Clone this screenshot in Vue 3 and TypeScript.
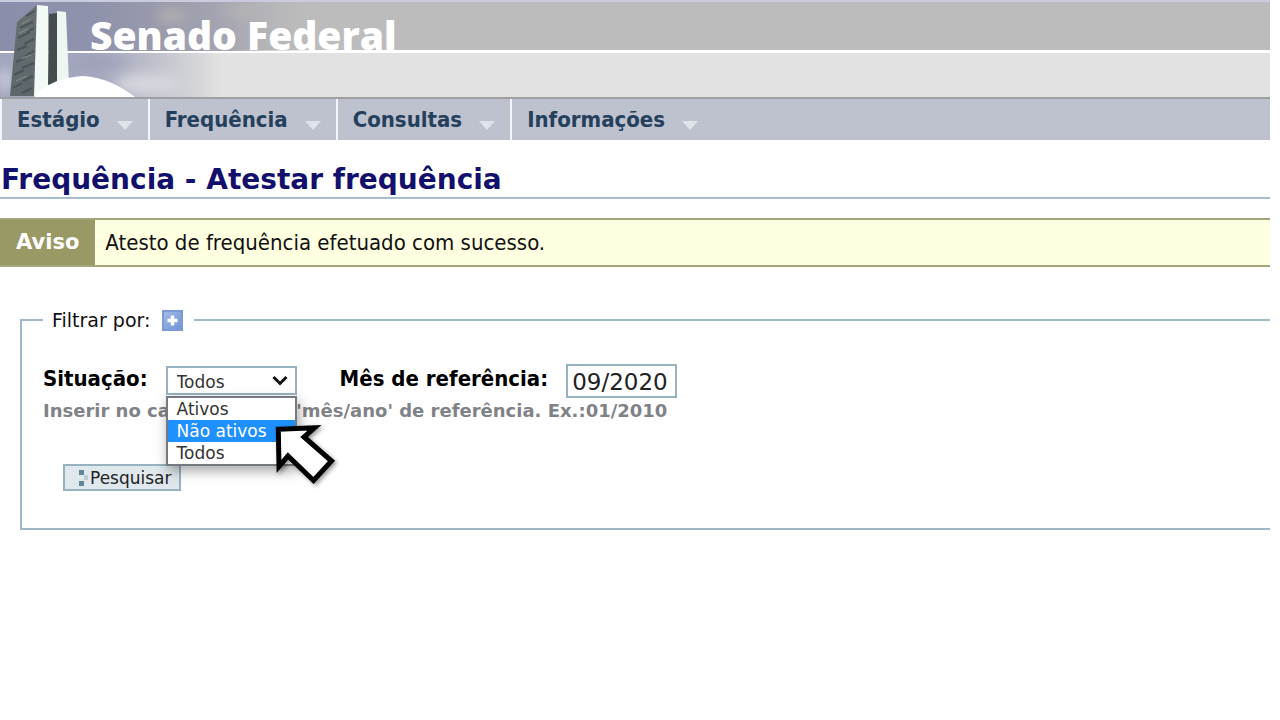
<script setup lang="ts">
import { ref } from 'vue'

const menus = ['Estágio', 'Frequência', 'Consultas', 'Informações']
const situations = ['Ativos', 'Não ativos', 'Todos']
const selected = ref('Todos')
const highlighted = ref('Não ativos')
const month = ref('09/2020')
</script>

<template>
  <div class="page">
    <header class="banner">
      <svg class="art" viewBox="0 0 340 97" width="340" height="97" aria-hidden="true">
        <defs>
          <linearGradient id="skyTop" x1="0" x2="1" y1="0" y2="0">
            <stop offset="0" stop-color="#8a8eab" />
            <stop offset="0.3" stop-color="#9093ac" />
            <stop offset="0.5" stop-color="#9b9cab" />
            <stop offset="0.68" stop-color="#a6a7b2" />
            <stop offset="0.95" stop-color="#bcbcbc" stop-opacity="0" />
          </linearGradient>
          <linearGradient id="skyLow" x1="0" x2="1" y1="0" y2="0">
            <stop offset="0" stop-color="#a2a6be" />
            <stop offset="0.28" stop-color="#a4a7bd" />
            <stop offset="0.45" stop-color="#bfc0cb" />
            <stop offset="0.6" stop-color="#d8d8dc" />
            <stop offset="0.66" stop-color="#e2e2e2" stop-opacity="0" />
          </linearGradient>
          <filter id="soft" x="-50%" y="-50%" width="200%" height="200%">
            <feGaussianBlur stdDeviation="6" />
          </filter>
          <linearGradient id="tower" x1="0" x2="0" y1="0" y2="1">
            <stop offset="0" stop-color="#68706f" />
            <stop offset="1" stop-color="#5c676b" />
          </linearGradient>
        </defs>
        <rect y="2" width="340" height="49" fill="url(#skyTop)" />
        <rect y="52" width="340" height="45" fill="url(#skyLow)" />
        <g filter="url(#soft)">
          <ellipse cx="5" cy="80" rx="8" ry="12" fill="#c4c6d6" />
          <ellipse cx="150" cy="84" rx="34" ry="10" fill="#d6d7de" />
          <ellipse cx="172" cy="16" rx="14" ry="5" fill="#b9b6b3" />
          <ellipse cx="240" cy="12" rx="18" ry="4" fill="#b9b7b5" />
          <ellipse cx="100" cy="62" rx="30" ry="5" fill="#9c9fba" />
        </g>
        <rect y="51" width="340" height="2" fill="#fff" />
        <path d="M17 22 37 5 35 96 10 96Z" fill="url(#tower)" />
        <path d="M20 28 33 22M18 38 30 32M24 44 34 39M17 50 27 46M25 56 34 51M16 62 25 58M22 68 34 63M14 75 24 70M23 81 33 76M13 88 22 83M22 93 32 88M26 16 35 11M27 32 34 28" fill="none" stroke="#49545a" stroke-width="2" />
        <path d="M19 33 28 29M21 59 31 55M16 81 27 76M22 24 30 19" fill="none" stroke="#84908f" stroke-width="1" />
        <path d="M37 5 48 6 49 96 34 96Z" fill="#f3faf5" />
        <path d="M49 14 57 13 57 81 48 85Z" fill="#444c4d" />
        <path d="M57 11 66 12 69 84 57 84Z" fill="#eef6f1" />
        <path d="M34 97C46 84 62 77 83 76C104 77 120 86 135 97Z" fill="#fff" />
      </svg>
      <h1 class="brand">Senado Federal</h1>
    </header>

    <nav class="menu">
      <a v-for="item in menus" :key="item" class="menu-item" href="#">
        {{ item }}
        <svg class="caret" width="16" height="9" viewBox="0 0 16 9" aria-hidden="true">
          <path d="M0 0H16L8 9Z" fill="#dfe3ea" />
        </svg>
      </a>
    </nav>

    <main>
      <h2 class="title">Frequência - Atestar frequência</h2>

      <div class="notice" role="status">
        <strong class="notice-tag">Aviso</strong>
        <span class="notice-text">Atesto de frequência efetuado com sucesso.</span>
      </div>

      <form @submit.prevent>
        <fieldset class="filter">
          <legend>
            <span>Filtrar por:</span>
            <button class="expand" type="button" aria-label="Expandir filtro">
              <svg width="21" height="21" viewBox="0 0 21 21" aria-hidden="true">
                <defs>
                  <linearGradient id="plus" x1="0" x2="1" y1="0" y2="1">
                    <stop offset="0" stop-color="#a3b9e6" />
                    <stop offset="1" stop-color="#7394d6" />
                  </linearGradient>
                </defs>
                <rect width="21" height="21" fill="#7e9ad6" />
                <rect x="2" y="2" width="17" height="17" fill="url(#plus)" />
                <path d="M10.500 5.500V15.500M5.500 10.500H15.500" stroke="#fff" stroke-width="3.500" />
              </svg>
            </button>
          </legend>

          <div class="row">
            <label for="situation">Situação:</label>
            <div class="picker">
              <select id="situation" v-model="selected">
                <option v-for="s in situations" :key="s">{{ s }}</option>
              </select>
              <svg class="chevron" width="16" height="11" viewBox="0 0 16 11" aria-hidden="true">
                <path d="M1.500 2 8 8.500 14.500 2" fill="none" stroke="#111" stroke-width="3" />
              </svg>
              <ul class="options">
                <li v-for="s in situations" :key="s" :class="{ active: s === highlighted }">{{ s }}</li>
              </ul>
              <svg class="pointer" width="68" height="68" viewBox="0 0 68 68" aria-hidden="true">
                <path d="M5.300 6.200 41.500 4.800 31 14 58.500 38 40.500 57.500 15 33 6 43.500Z" fill="#fff" stroke="#000" stroke-width="5" />
              </svg>
            </div>
            <label class="month-label" for="month">Mês de referência:</label>
            <input id="month" v-model="month" type="text" />
          </div>
          <p class="hint">Inserir no campo o valor 'mês/ano' de referência. Ex.:01/2010</p>

          <button class="search" type="submit">
            <svg width="10" height="16" viewBox="0 0 10 16" aria-hidden="true">
              <path d="M0 0H5V5H0ZM0 11H5V16H0Z" fill="#5f8796" />
              <path d="M5 5H9V10H5Z" fill="#bccdd4" />
            </svg>
            Pesquisar
          </button>
        </fieldset>
      </form>
    </main>
  </div>
</template>

<style>
body {
  margin: 0;
  background: #fff;
}
</style>

<style scoped>
.page {
  --narrow: 'DejaVu Sans Condensed', 'Noto Sans', sans-serif;
  --wide: 'DejaVu Sans', sans-serif;
  box-sizing: border-box;
  padding-right: 10px;
  overflow: hidden;
  font-family: var(--narrow);
  color: #111;
}
h1,
h2,
p,
ul {
  margin: 0;
  padding: 0;
}
.banner {
  position: relative;
  height: 97px;
  background: linear-gradient(#cbcbe0 0 2px, #bcbcbc 2px 50px, #fff 50px 53px, #e2e2e2 53px);
}
.art {
  position: absolute;
  left: 0;
  top: 0;
}
.brand {
  position: relative;
  padding-left: 90px;
  font: 800 39px/70px 'Open Sans', sans-serif;
  color: #fff;
}
.menu {
  display: flex;
  height: 41px;
  border-top: 2px solid #9d9fa3;
  background: #bec2ce;
}
.menu-item {
  display: flex;
  align-items: center;
  gap: 17px;
  box-sizing: border-box;
  padding: 0 15px;
  border-left: 2px solid #f4f5f8;
  font-size: 22px;
  font-weight: bold;
  color: #24405c;
  text-decoration: none;
}
.caret {
  margin-top: 12px;
}
.title {
  margin-top: 23px;
  padding-left: 1px;
  border-bottom: 2px solid #a5bdc9;
  font: bold 28px/34px var(--wide);
  color: #12106c;
}
.notice {
  display: flex;
  align-items: stretch;
  margin-top: 19px;
  border: solid #a5a57c;
  border-width: 2px 0;
  background: #ffffe1;
  font-size: 22px;
  line-height: 45px;
}
.notice-tag {
  padding: 0 16px;
  background: #999966;
  font: bold 21px/45px var(--wide);
  color: #fff;
}
.notice-text {
  padding-left: 10px;
}
.filter {
  min-width: 0;
  margin: 41px 0 0 20px;
  padding: 32px 0 37px 21px;
  border: 2px solid #a0b9c6;
  border-right: 0;
}
legend {
  display: flex;
  align-items: center;
  gap: 12px;
  height: 24px;
  padding: 0 11px 0 9px;
  font: 19px/24px var(--wide);
}
.expand {
  display: block;
  height: 21px;
  padding: 0;
  border: 0;
  background: none;
}
.expand svg {
  display: block;
}
.row {
  display: flex;
  align-items: center;
  gap: 18px;
}
.row label {
  padding-bottom: 4px;
  font-size: 22px;
  font-weight: bold;
  line-height: 30px;
  color: #000;
}
.row .month-label {
  margin-left: 25px;
}
.picker {
  position: relative;
  min-height: 30px;
}
select {
  display: block;
  box-sizing: border-box;
  width: 131px;
  height: 29px;
  padding: 2px 9px 0;
  border: 2px solid #98b3c0;
  border-radius: 0;
  background: #fff;
  appearance: none;
  font: 17px/24px var(--wide);
  color: #333;
}
.chevron {
  position: absolute;
  top: 9px;
  right: 9px;
  pointer-events: none;
}
.options {
  position: absolute;
  top: 30px;
  left: 0;
  z-index: 1;
  box-sizing: border-box;
  width: 131px;
  border: 2px solid #747a80;
  background: #fff;
  box-shadow: 2px 5px 12px rgba(0, 0, 0, 0.35);
  list-style: none;
  font: 17px/22px var(--wide);
  color: #333;
}
.options li {
  padding-left: 9px;
  white-space: nowrap;
}
.options .active {
  background: #1e90ff;
  color: #fff;
}
.pointer {
  position: absolute;
  top: 57px;
  left: 107px;
  z-index: 2;
  filter: drop-shadow(2px 2px 2px rgba(0, 0, 0, 0.4));
}
input {
  box-sizing: border-box;
  width: 111px;
  height: 34px;
  padding: 2px 4px 0;
  border: 2px solid #98b3c0;
  background: #fff;
  font: 23px/28px var(--wide);
  color: #222;
}
.hint {
  margin-top: 3px;
  font: bold 18px/20px var(--wide);
  color: #7f8286;
}
.search {
  display: flex;
  align-items: center;
  gap: 1px;
  box-sizing: border-box;
  height: 27px;
  margin: 43px 0 0 20px;
  padding: 0 7px 0 14px;
  border: 2px solid #98b3c0;
  background: #dfe8ec;
  font: 17px/22px var(--wide);
  color: #222;
}
</style>
